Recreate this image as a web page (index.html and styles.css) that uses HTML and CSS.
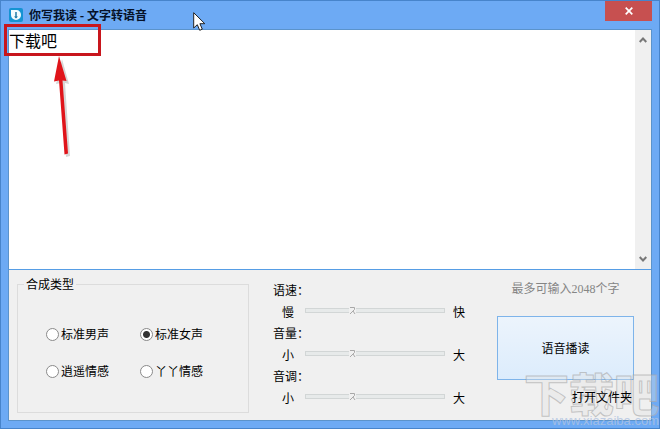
FILE: index.html
```html
<!DOCTYPE html>
<html lang="zh-CN">
<head>
<meta charset="utf-8">
<title>你写我读 - 文字转语音</title>
<link rel="stylesheet" href="styles.css">
</head>
<body>
<div class="window">

<div class="titlebar">
<svg class="logo" width="14" height="14" viewBox="0 0 14 14">
<rect width="14" height="14" rx="2" fill="#1593d2"/>
<path d="M2 2h5.500a4.500 5 0 0 1 4.500 5a5 5 0 0 1-10 0z" fill="#f4fbfe"/>
<path d="M6.300 4h1.400v4.500h1.300l-2 2-2-2h1.300z" fill="#15719f"/>
</svg>
<h1>你写我读 - 文字转语音</h1>
<button type="button" class="close" aria-label="关闭">
<svg width="8" height="8" viewBox="0 0 8 8"><path d="M.7.7l6.600 6.600M7.300.7L.7 7.300" stroke="#fff" stroke-width="1.700"/></svg>
</button>
</div>

<div class="client">
<div class="editor">
<textarea class="text" aria-label="文字" maxlength="2048" spellcheck="false">下载吧</textarea>
<div class="scrollbar">
<button type="button" aria-label="向上"><svg width="8" height="6" viewBox="0 0 8 6"><path d="M.7 5L4 1.500 7.300 5" fill="none" stroke="#777" stroke-width="2"/></svg></button>
<button type="button" aria-label="向下"><svg width="8" height="6" viewBox="0 0 8 6"><path d="M.7 1L4 4.500 7.300 1" fill="none" stroke="#777" stroke-width="2"/></svg></button>
</div>
</div>

<form class="panel">
<fieldset class="voices">
<legend>合成类型</legend>
<div class="choices">
<label><input type="radio" name="voice">标准男声</label>
<label><input type="radio" name="voice" checked>标准女声</label>
<label><input type="radio" name="voice">逍遥情感</label>
<label><input type="radio" name="voice">丫丫情感</label>
</div>
</fieldset>

<div class="sliders">
<label for="speed">语速：</label>
<div class="slider"><span>慢</span><input type="range" id="speed" min="0" max="100" value="33"><span>快</span></div>
<label for="volume">音量：</label>
<div class="slider"><span>小</span><input type="range" id="volume" min="0" max="100" value="33"><span>大</span></div>
<label for="pitch">音调：</label>
<div class="slider"><span>小</span><input type="range" id="pitch" min="0" max="100" value="33"><span>大</span></div>
</div>

<div class="actions">
<p class="hint">最多可输入2048个字</p>
<button type="button" class="read">语音播读</button>
<button type="button" class="folder">打开文件夹</button>
</div>
</form>
</div>

<!-- marks over the window -->
<div class="highlight"></div>
<svg class="arrow" width="30" height="106" viewBox="0 0 30 106">
<path d="M11 3l7 25-4-1 5 73-4 1-5-74-5 1z" fill="#777" opacity=".3" transform="translate(1 1)"/>
<path d="M9 1l7.500 25-4-.5 5.500 73-3.500 1-5.500-74-5 1z" fill="#e0141a"/>
</svg>
<svg class="cursor" width="13" height="20" viewBox="0 0 13 20">
<path d="M.7.7v15.300l3.600-3.300 2.400 5.600 2.600-1.100-2.400-5.500h4.900z" fill="#fff" stroke="#222" stroke-width="1"/>
</svg>
<div class="watermark">
<span class="mark">下载吧</span>
<span class="site">www.xiazaiba.com</span>
</div>

</div>
</body>
</html>
```
FILE: styles.css
```css
* {
  box-sizing: border-box;
}

body {
  margin: 0;
  font-family: "Noto Sans CJK SC", sans-serif;
  font-size: 12px;
  line-height: 16px;
  color: #000;
}

button,
input,
textarea {
  margin: 0;
  padding: 0;
  font: inherit;
  color: inherit;
}

.window {
  position: relative;
  display: flex;
  flex-direction: column;
  min-height: 100vh;
  padding: 0 7px 7px;
  overflow: hidden;
  background: #6daaf4;
  border: 1px solid #4784cb;
}

.titlebar {
  display: flex;
  align-items: center;
  gap: 6px;
  height: 28px;
  padding-left: 1px;
}

.titlebar h1 {
  margin: 0;
  font-size: 12px;
  font-weight: bold;
  color: #061228;
}

.close {
  display: grid;
  place-items: center;
  align-self: flex-start;
  width: 47px;
  height: 20px;
  margin-left: auto;
  background: #c75050;
  border: 0;
}

.client {
  flex: 1;
  display: flex;
  flex-direction: column;
  background: #f0f0f0;
  border: 1px solid #5b93cb;
}

.editor {
  flex: 1;
  display: flex;
  background: #fff;
  border-bottom: 1px solid #569de5;
}

.text {
  flex: 1;
  padding: 0;
  font-size: 16px;
  line-height: 20px;
  border: 0;
  outline: 0;
  resize: none;
}

.scrollbar {
  display: flex;
  flex-direction: column;
  justify-content: space-between;
  width: 16px;
  background: #f0f0f0;
}

.scrollbar button {
  display: grid;
  place-items: center;
  height: 20px;
  background: none;
  border: 0;
}

/* bottom controls */
.panel {
  display: grid;
  grid-template-columns: 232fr 200fr 137fr;
  gap: 24px;
  padding: 6px 17px 7px 8px;
}

.voices {
  min-width: 0;
  margin: 0;
  padding: 0 0 0 28px;
  border: 1px solid #dcdcdc;
}

.voices legend {
  margin-left: -22px;
  padding: 0 2px;
}

.choices {
  display: grid;
  grid-template-columns: 94px 94px;
  gap: 21px 0;
  padding-top: 34px;
}

.choices label {
  display: flex;
  align-items: center;
  gap: 2px;
}

.choices input {
  appearance: none;
  width: 13px;
  height: 13px;
  background: #fff;
  border: 1px solid #8a8a8a;
  border-radius: 50%;
}

.choices input:checked {
  background: radial-gradient(circle, #333 3px, #fff 4px);
}

.sliders {
  padding: 3px 0 5px;
}

.sliders label {
  display: block;
  line-height: 22px;
}

.slider {
  display: flex;
  height: 21px;
  padding: 0 8px 0 9px;
  line-height: 21px;
}

.slider input {
  appearance: none;
  flex: 1;
  min-width: 0;
  height: 18px;
  margin: 0 8px 0 11px;
  background: none;
}

.slider input::-webkit-slider-runnable-track {
  height: 5px;
  background: #e7eaea;
  border: 1px solid #d2d6d6;
}

.slider input::-webkit-slider-thumb {
  appearance: none;
  width: 7px;
  height: 9px;
  margin-top: -3px;
  background: #f0f0f0 url("data:image/svg+xml,%3Csvg xmlns='http://www.w3.org/2000/svg' width='7' height='9'%3E%3Cpath d='M1 1.500H5.500V3.500L1 8M4 5L6 8' fill='none' stroke='%23a8a8a8'/%3E%3C/svg%3E");
}

.actions {
  display: flex;
  flex-direction: column;
}

.hint {
  margin: 5px 0 19px;
  font-family: "Liberation Serif", "Noto Sans CJK SC", serif;
  text-align: center;
  color: #858585;
}

.read {
  height: 64px;
  background: linear-gradient(#ecf4fc, #dcecfc);
  border: 1px solid #7eb4ea;
}

.folder {
  position: relative;
  z-index: 1;
  align-self: flex-end;
  margin: 9px 2px 0 0;
  background: none;
  border: 0;
}

/* marks over the window */
.highlight,
.arrow,
.cursor,
.watermark {
  position: absolute;
  pointer-events: none;
}

.highlight {
  left: 3px;
  top: 23px;
  width: 97px;
  height: 32px;
  border: 3px solid #c8161d;
}

.arrow {
  left: 49px;
  top: 54px;
}

.cursor {
  left: 192px;
  top: 11px;
}

.watermark {
  right: 0;
  bottom: 0;
  display: flex;
  flex-direction: column;
  align-items: flex-end;
}

.mark {
  font-size: 45px;
  font-weight: 900;
  line-height: 42px;
  color: rgba(228, 228, 228, 0.35);
  -webkit-text-stroke: 1px rgba(165, 165, 165, 0.6);
}

.site {
  font-family: "Liberation Sans", sans-serif;
  font-size: 13px;
  line-height: 14px;
  color: rgba(175, 195, 225, 0.8);
}
```
